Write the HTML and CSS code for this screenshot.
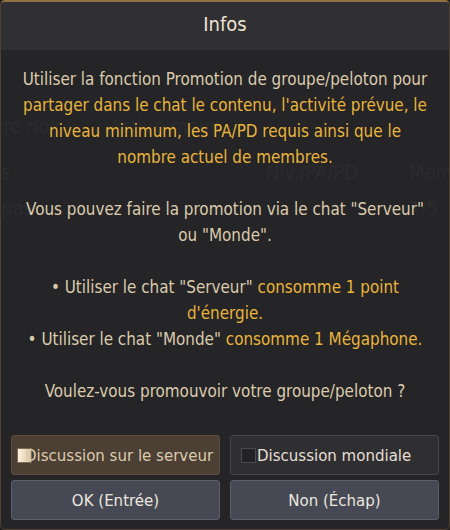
FILE: index.html
```html
<!DOCTYPE html>
<html lang="fr">
<head>
    <meta charset="UTF-8">
    <title>Infos</title>
    <link rel="stylesheet" href="styles.css">
</head>
<body>
    <div class="dialog">
        <!-- liste des groupes visible sous la fenêtre -->
        <div class="behind" aria-hidden="true">
            <span class="ghost g1">re noir</span>
            <span class="ghost g2">Activé maint.</span>
            <span class="ghost g3">s</span>
            <span class="ghost g4">Niv./PA/PD</span>
            <span class="ghost g5">Mem</span>
            <span class="ghost g6">pas</span>
            <span class="ghost g7">1/5</span>
        </div>

        <div class="header">Infos</div>

        <div class="content">
            <p>Utiliser la fonction Promotion de groupe/peloton pour<br>
            <span class="gold">partager dans le chat le contenu, l'activité prévue, le<br>
            niveau minimum, les PA/PD requis ainsi que le<br>
            nombre actuel de membres.</span></p>
            <p class="gap">Vous pouvez faire la promotion via le chat "Serveur"<br>ou "Monde".</p>
            <p class="gap">• Utiliser le chat "Serveur" <span class="gold">consomme 1 point<br>d'énergie.</span><br>
            • Utiliser le chat "Monde" <span class="gold">consomme 1 Mégaphone.</span></p>
            <p class="gap">Voulez-vous promouvoir votre groupe/peloton ?</p>
        </div>

        <div class="buttons">
            <button class="btn opt selected"><span class="box"></span>Discussion sur le serveur</button>
            <button class="btn opt"><span class="box"></span>Discussion mondiale</button>
            <button class="btn action">OK (Entrée)</button>
            <button class="btn action">Non (Échap)</button>
        </div>
    </div>
</body>
</html>
```

FILE: styles.css
```css
html, body { margin: 0; padding: 0; background: #1c1c1e; }
body { font-family: "DejaVu Sans Condensed", "DejaVu Sans", sans-serif; }

.dialog {
    position: relative;
    width: 450px; height: 530px;
    box-sizing: border-box;
    background: #252527;
    border: 1px solid #4e4131;
    border-top: 2px solid #8d713f;
    border-radius: 5px;
    overflow: hidden;
    display: flex; flex-direction: column;
}

.behind { position: absolute; left: 0; top: 0; right: 0; bottom: 0; font-size: 20px; color: #2b2b2e; white-space: nowrap; }
.ghost { position: absolute; }
.g1 { left: 2px; top: 112px; }
.g2 { left: 108px; top: 112px; }
.g3 { left: 0; top: 158px; }
.g4 { left: 265px; top: 158px; }
.g5 { left: 408px; top: 158px; }
.g6 { left: 0; top: 194px; }
.g7 { left: 408px; top: 194px; }

.header {
    position: relative;
    height: 48px; line-height: 44px;
    background: #303034;
    text-align: center;
    font-size: 20px;
    color: #efe4d2;
}

.content {
    position: relative;
    padding: 16px 4px 0;
    text-align: center;
    font-size: 16.9px;
    line-height: 26px;
    color: #dbcbae;
}
.content p { margin: 0; }
.content .gap { margin-top: 26px; }
.gold { color: #e9b43c; }

.buttons {
    position: relative;
    margin-top: auto;
    padding: 0 10px 9px;
    display: grid;
    grid-template-columns: 1fr 1fr;
    column-gap: 10px; row-gap: 5px;
}

.btn {
    height: 40px;
    font-family: inherit;
    font-size: 16.7px;
    border-radius: 3px;
    padding: 0;
}
.opt {
    display: flex; align-items: center;
    padding-left: 10px;
    background: #2f2f32;
    border: 1px solid #47474b;
    color: #e6dfd4;
}
.opt.selected { background: #4c3f34; border-color: #5d4d3f; color: #dccbad; padding-left: 5px; }
.box {
    width: 13px; height: 13px;
    margin-right: 1px;
    background: #222224;
    border: 1px solid #4a4a4e;
    flex: none;
}
.selected .box {
    background: linear-gradient(90deg, #fff4de, #d8c4a2);
    border-color: #7a6a58;
    margin-right: -7px;
}
.action {
    background: #464953;
    border: 1px solid #5d606a;
    color: #ebe7df;
}
```
